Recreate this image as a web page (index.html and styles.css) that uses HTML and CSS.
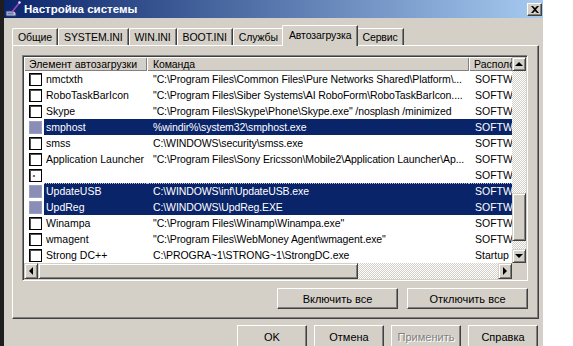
FILE: index.html
```html
<!DOCTYPE html>
<html lang="ru">
<head>
    <meta charset="UTF-8">
    <meta name="viewport" content="width=device-width, initial-scale=1.0">
    <title>Настройка системы</title>
    <link rel="stylesheet" href="styles.css">
</head>
<body>
    <div class="window">
        <div class="titlebar">
            <svg class="app-icon" width="16" height="16" viewBox="0 0 16 16">
                <path d="M1 10 L9 10 L11 12 L11 15 L1 15 Z" fill="#b8c4dc" stroke="#2a3a6a" stroke-width="1"/>
                <rect x="2.5" y="11.5" width="6" height="2" fill="#6a7cb0"/>
                <line x1="7" y1="11" x2="15" y2="1" stroke="#b040c0" stroke-width="1.5"/>
                <circle cx="14.5" cy="1.5" r="1.2" fill="#f0e0ff"/>
            </svg>
            <span class="title">Настройка системы</span>
            <button class="close-btn" type="button">
                <svg width="8" height="7" viewBox="0 0 8 7">
                    <path d="M0 0 L2 0 L4 2 L6 0 L8 0 L5 3.5 L8 7 L6 7 L4 5 L2 7 L0 7 L3 3.5 Z" fill="#000"/>
                </svg>
            </button>
        </div>

        <div class="content">
            <div class="tabs">
                <div class="tab">Общие</div>
                <div class="tab">SYSTEM.INI</div>
                <div class="tab">WIN.INI</div>
                <div class="tab">BOOT.INI</div>
                <div class="tab">Службы</div>
                <div class="tab active">Автозагрузка</div>
                <div class="tab">Сервис</div>
            </div>

            <div class="panel">
                <div class="listview">
                    <div class="list-top">
                        <div class="list-view">
                            <div class="list-header">
                                <div class="hcell col-name">Элемент автозагрузки</div>
                                <div class="hcell col-cmd">Команда</div>
                                <div class="hcell col-loc">Расположение</div>
                            </div>
                            <div class="row">
                                <div class="col-name"><span class="check"></span><span class="label">nmctxth</span></div>
                                <div class="col-cmd">"C:\Program Files\Common Files\Pure Networks Shared\Platform\...</div>
                                <div class="col-loc">SOFTWARE</div>
                            </div>
                            <div class="row">
                                <div class="col-name"><span class="check"></span><span class="label">RoboTaskBarIcon</span></div>
                                <div class="col-cmd">"C:\Program Files\Siber Systems\AI RoboForm\RoboTaskBarIcon....</div>
                                <div class="col-loc">SOFTWARE</div>
                            </div>
                            <div class="row">
                                <div class="col-name"><span class="check"></span><span class="label">Skype</span></div>
                                <div class="col-cmd">"C:\Program Files\Skype\Phone\Skype.exe" /nosplash /minimized</div>
                                <div class="col-loc">SOFTWARE</div>
                            </div>
                            <div class="row selected">
                                <div class="col-name"><span class="check"></span><span class="label">smphost</span></div>
                                <div class="col-cmd">%windir%\system32\smphost.exe</div>
                                <div class="col-loc">SOFTWARE</div>
                            </div>
                            <div class="row">
                                <div class="col-name"><span class="check"></span><span class="label">smss</span></div>
                                <div class="col-cmd">C:\WINDOWS\security\smss.exe</div>
                                <div class="col-loc">SOFTWARE</div>
                            </div>
                            <div class="row">
                                <div class="col-name"><span class="check"></span><span class="label">Application Launcher</span></div>
                                <div class="col-cmd">"C:\Program Files\Sony Ericsson\Mobile2\Application Launcher\Ap...</div>
                                <div class="col-loc">SOFTWARE</div>
                            </div>
                            <div class="row">
                                <div class="col-name"><span class="check dotted"></span><span class="label"></span></div>
                                <div class="col-cmd"></div>
                                <div class="col-loc">SOFTWARE</div>
                            </div>
                            <div class="row selected focused">
                                <div class="col-name"><span class="check"></span><span class="label">UpdateUSB</span></div>
                                <div class="col-cmd">C:\WINDOWS\inf\UpdateUSB.exe</div>
                                <div class="col-loc">SOFTWARE</div>
                            </div>
                            <div class="row selected">
                                <div class="col-name"><span class="check"></span><span class="label">UpdReg</span></div>
                                <div class="col-cmd">C:\WINDOWS\UpdReg.EXE</div>
                                <div class="col-loc">SOFTWARE</div>
                            </div>
                            <div class="row">
                                <div class="col-name"><span class="check"></span><span class="label">Winampa</span></div>
                                <div class="col-cmd">"C:\Program Files\Winamp\Winampa.exe"</div>
                                <div class="col-loc">SOFTWARE</div>
                            </div>
                            <div class="row">
                                <div class="col-name"><span class="check"></span><span class="label">wmagent</span></div>
                                <div class="col-cmd">"C:\Program Files\WebMoney Agent\wmagent.exe"</div>
                                <div class="col-loc">SOFTWARE</div>
                            </div>
                            <div class="row">
                                <div class="col-name"><span class="check"></span><span class="label">Strong DC++</span></div>
                                <div class="col-cmd">C:\PROGRA~1\STRONG~1\StrongDC.exe</div>
                                <div class="col-loc">Startup</div>
                            </div>
                        </div>

                        <div class="vscroll">
                            <div class="sb-btn"><span class="arrow up"></span></div>
                            <div class="sb-track grow"></div>
                            <div class="sb-thumb v"></div>
                            <div class="sb-track v-rest"></div>
                            <div class="sb-btn"><span class="arrow down"></span></div>
                        </div>
                    </div>
                    <div class="hscroll">
                        <div class="sb-btn"><span class="arrow left"></span></div>
                        <div class="sb-thumb h"></div>
                        <div class="sb-track grow"></div>
                        <div class="sb-btn"><span class="arrow right"></span></div>
                        <div class="sb-corner"></div>
                    </div>
                </div>

                <div class="panel-buttons">
                    <button class="btn wide" type="button">Включить все</button>
                    <button class="btn wide" type="button">Отключить все</button>
                </div>
            </div>

            <div class="dialog-buttons">
                <button class="btn" type="button">OK</button>
                <button class="btn" type="button">Отмена</button>
                <button class="btn disabled" type="button">Применить</button>
                <button class="btn" type="button">Справка</button>
            </div>
        </div>
    </div>
</body>
</html>
```

FILE: styles.css
```css
body {
    background-color: #FFFFFF;
    color: #000000;
    font-family: 'Liberation Sans', Tahoma, sans-serif;
    font-size: 10.5px;
    margin: 0;
    padding: 0;
}

.window {
    background-color: #D4D0C8;
    border-left: 4px solid #1E1E1E;
    height: 346px;
    overflow: hidden;
    width: 543px;
    box-sizing: border-box;
}

.titlebar {
    align-items: center;
    background: linear-gradient(to right, #0A246A, #A6CAF0);
    display: flex;
    height: 18px;
    padding: 0 1px;
}
.app-icon {
    flex: none;
    margin-right: 3px;
}
.title {
    color: #FFFFFF;
    flex: 1;
    font-size: 11.5px;
    font-weight: bold;
}
.close-btn {
    align-items: center;
    background-color: #D4D0C8;
    border: 1px solid;
    border-color: #FFFFFF #404040 #404040 #FFFFFF;
    box-shadow: inset -1px -1px #808080;
    display: flex;
    height: 13px;
    justify-content: center;
    padding: 0;
    width: 15px;
}

.content {
    padding: 7px 0 0 8px;
}

.tabs {
    align-items: flex-end;
    display: flex;
    height: 20px;
}
.tab {
    border-left: 1px solid #FFFFFF;
    border-right: 1px solid #404040;
    border-top: 1px solid #FFFFFF;
    border-top-left-radius: 2px;
    box-shadow: inset -1px 0 #808080;
    height: 16px;
    letter-spacing: -0.1px;
    line-height: 16px;
    padding: 0 5px;
}
.tab.active {
    background-color: #D4D0C8;
    height: 20px;
    line-height: 18px;
    margin: 0 -2px -1px;
    padding: 0 6px;
    position: relative;
    z-index: 1;
}

.panel {
    border-left: 1px solid #FFFFFF;
    border-top: 1px solid #FFFFFF;
    border-right: 1px solid #404040;
    border-bottom: 1px solid #404040;
    box-shadow: inset -1px -1px #808080;
    height: 274px;
    padding: 9px 10px 0 9px;
    width: 527px;
    box-sizing: border-box;
}

.listview {
    background-color: #FFFFFF;
    border: 1px solid;
    border-color: #808080 #FFFFFF #FFFFFF #808080;
    box-shadow: inset 1px 1px #404040, inset -1px -1px #D4D0C8;
    display: flex;
    flex-direction: column;
    height: 226px;
    padding: 1px;
    width: 506px;
    box-sizing: border-box;
}
.list-top {
    display: flex;
    flex: 1;
    min-height: 0;
}
.list-view {
    flex: 1;
    min-width: 0;
    overflow: hidden;
}

.list-header {
    display: flex;
    height: 14px;
}
.hcell {
    background-color: #D4D0C8;
    box-shadow: inset 1px 1px #FFFFFF, inset -1px -1px #808080;
    line-height: 14px;
    overflow: hidden;
    padding-left: 5px;
    white-space: nowrap;
    box-sizing: border-box;
}

.col-name {
    align-items: center;
    display: flex;
    flex: none;
    width: 123px;
}
.col-cmd {
    flex: none;
    letter-spacing: -0.1px;
    overflow: hidden;
    padding-left: 6px;
    text-overflow: clip;
    white-space: nowrap;
    width: 322px;
    box-sizing: border-box;
}
.col-loc {
    flex: none;
    overflow: hidden;
    padding-left: 6px;
    white-space: nowrap;
    width: 43px;
    box-sizing: border-box;
}
.list-header .col-loc {
    padding-left: 5px;
}

.row {
    display: flex;
    height: 16px;
    line-height: 16px;
}
.check {
    background-color: #FFFFFF;
    border: 1px solid #000000;
    box-shadow: inset 1px 1px #505050;
    flex: none;
    height: 13px;
    margin: 0 2px 0 5px;
    width: 13px;
    box-sizing: border-box;
}
.check.dotted {
    background: radial-gradient(circle at 35% 55%, #707070 0 1px, #FFFFFF 1.5px);
}
.label {
    flex: 1;
    height: 16px;
    overflow: hidden;
    padding-left: 2px;
    white-space: nowrap;
}

.row.selected .label,
.row.selected .col-cmd,
.row.selected .col-loc {
    background-color: #0A246A;
    color: #FFFFFF;
}
.row.selected .check {
    background-color: #8A8EB6;
    border-color: #9CA0C4;
    box-shadow: none;
}
.row.focused .label,
.row.focused .col-cmd,
.row.focused .col-loc {
    border-top: 1px dotted #B8C0D8;
    line-height: 14px;
    box-sizing: border-box;
}

.vscroll {
    display: flex;
    flex: none;
    flex-direction: column;
    width: 14px;
}
.hscroll {
    display: flex;
    flex: none;
    height: 16px;
}

.sb-btn {
    align-items: center;
    background-color: #D4D0C8;
    border: 1px solid;
    border-color: #D4D0C8 #404040 #404040 #D4D0C8;
    box-shadow: inset 1px 1px #FFFFFF, inset -1px -1px #808080;
    display: flex;
    flex: none;
    height: 14px;
    justify-content: center;
    width: 14px;
    box-sizing: border-box;
}
.hscroll .sb-btn {
    height: 16px;
}
.sb-track {
    background: repeating-conic-gradient(#FFFFFF 0 25%, #D4D0C8 0 50%) 0 0 / 2px 2px;
}
.sb-track.grow {
    flex: 1;
}
.sb-track.v-rest {
    flex: none;
    height: 8px;
}
.sb-thumb {
    background-color: #D4D0C8;
    border: 1px solid;
    border-color: #D4D0C8 #404040 #404040 #D4D0C8;
    box-shadow: inset 1px 1px #FFFFFF, inset -1px -1px #808080;
    flex: none;
    box-sizing: border-box;
}
.sb-thumb.v {
    height: 48px;
}
.sb-thumb.h {
    width: 320px;
}
.sb-corner {
    background-color: #D4D0C8;
    flex: none;
    width: 14px;
}

.arrow {
    border: 0 solid transparent;
    height: 0;
    width: 0;
}
.arrow.up {
    border-bottom: 4px solid #000000;
    border-left-width: 4px;
    border-right-width: 4px;
}
.arrow.down {
    border-top: 4px solid #000000;
    border-left-width: 4px;
    border-right-width: 4px;
}
.arrow.left {
    border-bottom-width: 4px;
    border-right: 4px solid #000000;
    border-top-width: 4px;
}
.arrow.right {
    border-bottom-width: 4px;
    border-left: 4px solid #000000;
    border-top-width: 4px;
}

.panel-buttons {
    display: flex;
    gap: 9px;
    justify-content: flex-end;
    margin-top: 7px;
}

.btn {
    background-color: #D4D0C8;
    border: 1px solid;
    border-color: #FFFFFF #404040 #404040 #FFFFFF;
    box-shadow: inset -1px -1px #808080;
    color: #000000;
    font-family: 'Liberation Sans', Tahoma, sans-serif;
    font-size: 11px;
    height: 23px;
    padding: 0;
    width: 70px;
}
.btn.wide {
    height: 21px;
    width: 121px;
}
.btn.disabled {
    color: #808080;
    text-shadow: 1px 1px #FFFFFF;
}

.dialog-buttons {
    display: flex;
    gap: 7px;
    justify-content: flex-end;
    margin-top: 6px;
    padding-right: 5px;
}
```
